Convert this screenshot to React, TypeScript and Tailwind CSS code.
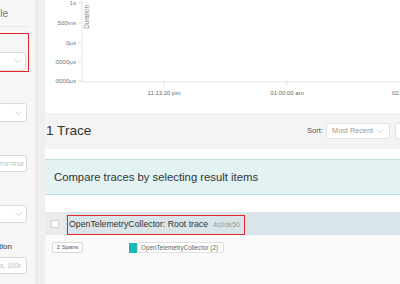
import React from "react";

function Chevron() {
  return (
    <svg width="7" height="4" viewBox="0 0 7 4" fill="none">
      <path d="M0.5 0.5 L3.5 3.5 L6.5 0.5" stroke="#c4c4c4" strokeWidth="0.8" />
    </svg>
  );
}

function SideSelect({ className = "" }: { className?: string }) {
  return (
    <div
      className={`flex items-center justify-end rounded-[3px] border border-[#d9d9d9] bg-white pr-[4px] ${className}`}
    >
      <Chevron />
    </div>
  );
}

function Chart() {
  const yLabels = [
    { t: "1s", y: 3 },
    { t: "500ms", y: 23 },
    { t: "0μs", y: 43 },
    { t: "0000μs", y: 62 },
    { t: "0000μs", y: 81 },
  ];
  return (
    <svg width="355" height="113" className="block">
      <line x1="37" y1="0" x2="37" y2="82" stroke="#e3e3e3" strokeWidth="1" />
      <line x1="37" y1="82" x2="355" y2="82" stroke="#e3e3e3" strokeWidth="1" />
      {yLabels.map((l, i) => (
        <g key={i}>
          <line x1="33" y1={l.y} x2="37" y2={l.y} stroke="#e3e3e3" />
          <text
            x="31"
            y={l.y + 2}
            textAnchor="end"
            fontSize="6.2"
            fill="#777"
            fontFamily="Liberation Sans, Arial, sans-serif"
          >
            {l.t}
          </text>
        </g>
      ))}
      <text
        transform="translate(44,5) rotate(-90)"
        textAnchor="end"
        fontSize="6.3"
        fill="#777"
        fontFamily="Liberation Sans, Arial, sans-serif"
      >
        Duration
      </text>
      {[119, 242].map((x) => (
        <line key={x} x1={x} y1="80" x2={x} y2="86" stroke="#e3e3e3" />
      ))}
      <text x="119" y="95" textAnchor="middle" fontSize="6" fill="#666" fontFamily="Liberation Sans, Arial, sans-serif">
        11:13:20 pm
      </text>
      <text x="242" y="95" textAnchor="middle" fontSize="6" fill="#666" fontFamily="Liberation Sans, Arial, sans-serif">
        01:00:00 am
      </text>
      <text x="347" y="95" fontSize="6" fill="#666" fontFamily="Liberation Sans, Arial, sans-serif">
        02:46:40 am
      </text>
    </svg>
  );
}

export default function App() {
  return (
    <div className="flex h-[284px] w-[400px] overflow-hidden bg-[#efefef] font-['Liberation_Sans',Arial,sans-serif]">
      {/* search form */}
      <aside className="w-[37px] shrink-0 overflow-hidden border-r border-[#e2e2e2] bg-[#f6f6f6]">
        <div className="ml-[-173px] w-[200px]">
          <div className="flex h-[27px] items-center justify-end gap-[14px] border-b border-[#e6e6e6] pr-[21px] text-[10px]">
            <span className="text-[#1890ff]">Search</span>
            <span className="mr-[-2px] text-[#777]">JSON File</span>
          </div>
          <div className="mr-[-2px] mt-[6px] flex h-[39px] flex-col justify-end border-[1.5px] border-[#e3262c] pb-[0.5px]">
            <div className="mb-[3px] pl-[4px] text-[8px] text-[#333]">Service</div>
            <SideSelect className="mr-[2px] h-[19px]" />
          </div>
          <div className="mt-[31px]">
            <SideSelect className="h-[19px]" />
          </div>
          <div className="mt-[33px] flex h-[17px] items-center justify-end overflow-hidden whitespace-nowrap rounded-[3px] border border-[#d9d9d9] bg-white pr-[2px] text-[6.5px] text-[#bdbdbd]">
            http.status_code=200 error=true
          </div>
          <div className="mt-[33px]">
            <SideSelect className="h-[18px]" />
          </div>
          <div className="mt-[18px] h-[12px] pr-[15px] text-right text-[8px] leading-[12px] text-[#333]">
            Max Duration
          </div>
          <div className="mt-[4px] flex h-[17px] items-center justify-end rounded-[3px] border border-[#d9d9d9] bg-white pr-[5px]">
            <div className="flex w-[60px] justify-end overflow-hidden whitespace-nowrap text-[6.5px] text-[#bdbdbd]">
              <span className="mr-[-27px] shrink-0">e.g. 1.2s, 100ms, 500us</span>
            </div>
          </div>
        </div>
      </aside>

      {/* results */}
      <main className="ml-[8px] w-[355px] shrink-0 bg-white">
        <Chart />

        <div className="flex h-[36px] items-center bg-[#f4f4f4]">
          <span className="w-[262px] shrink-0 pl-[1px] text-[13.6px] text-[#333]">1 Trace</span>
          <span className="shrink-0 text-[7.6px] text-[#555]">Sort:</span>
          <div className="ml-[3px] flex h-[16px] w-[64px] shrink-0 items-center justify-between rounded-[2px] border border-[#e2e2e2] bg-white pl-[5px] pr-[5px] text-[7.3px] text-[#9a9a9a]">
            <span>Most Recent</span>
            <Chevron />
          </div>
          <div className="ml-[5px] h-[16px] w-[80px] shrink-0 rounded-[2px] border border-[#e2e2e2] bg-white" />
        </div>

        <div className="mt-[10px] flex h-[36px] items-center border-y border-[#bcdfdf] bg-[#e3f2f2] pl-[9px] text-[11.3px] text-[#333]">
          Compare traces by selecting result items
        </div>

        <div className="mt-[17px]">
          <div className="flex h-[23px] bg-[#d9e5e9]">
            <div className="flex w-[20px] items-center bg-[#e8eaeb] pl-[6px]">
              <div className="h-[8px] w-[8px] border border-[#d0d0d0] bg-white" />
            </div>
            <div className="ml-[2px] mt-[3px] flex h-[20px] w-[178px] items-center overflow-hidden whitespace-nowrap border-[1.5px] border-[#e0282e] pl-[1px]">
              <span className="text-[8.75px] text-[#333]">OpenTelemetryCollector: Root trace</span>
              <span className="ml-[5px] text-[7px] text-[#999]">4c0de50</span>
            </div>
          </div>
          <div className="flex h-[49px] items-start bg-[#fafafa] pl-[7px] pt-[7px]">
            <div className="flex h-[11px] w-[31px] items-center justify-center rounded-[2px] border border-[#d9d9d9] bg-white text-[5.8px] text-[#555]">
              2 Spans
            </div>
            <div className="ml-[46px] mt-[1px] h-[10px] w-[8px] bg-[#1fb6b8]" />
            <div className="flex h-[11px] w-[87px] items-center rounded-[2px] border border-[#e0e0e0] bg-white pl-[3px] text-[6.3px] text-[#666]">
              OpenTelemetryCollector (2)
            </div>
          </div>
        </div>
      </main>
    </div>
  );
}
